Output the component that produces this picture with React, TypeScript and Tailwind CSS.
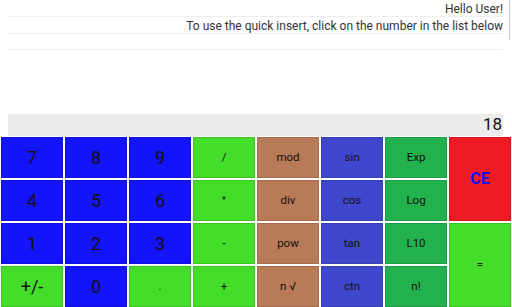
import React from 'react';

type Key = {
  label: string;
  bg: string;
  text?: string;
  span?: string;
};

const BLUE = 'bg-[#1414fb] border-[#1010d8]';
const LIME = 'bg-[#44dd2a] border-[#3cc424]';
const BROWN = 'bg-[#b97a57] border-[#a86c4c]';
const INDIGO = 'bg-[#3f48cc] border-[#3840b4]';
const GREEN = 'bg-[#22b14c] border-[#1e9c43]';
const RED = 'bg-[#ed1c24] border-[#d8161e]';

const keys: Key[] = [
  { label: '7', bg: BLUE, text: 'text-[18px]' },
  { label: '8', bg: BLUE, text: 'text-[18px]' },
  { label: '9', bg: BLUE, text: 'text-[18px]' },
  { label: '/', bg: LIME },
  { label: 'mod', bg: BROWN },
  { label: 'sin', bg: INDIGO },
  { label: 'Exp', bg: GREEN },
  { label: 'CE', bg: RED, text: 'text-[16px] font-bold text-[#1010ff]', span: 'row-span-2' },

  { label: '4', bg: BLUE, text: 'text-[18px]' },
  { label: '5', bg: BLUE, text: 'text-[18px]' },
  { label: '6', bg: BLUE, text: 'text-[18px]' },
  { label: '*', bg: LIME, text: 'text-[9px]' },
  { label: 'div', bg: BROWN },
  { label: 'cos', bg: INDIGO },
  { label: 'Log', bg: GREEN },

  { label: '1', bg: BLUE, text: 'text-[18px]' },
  { label: '2', bg: BLUE, text: 'text-[18px]' },
  { label: '3', bg: BLUE, text: 'text-[18px]' },
  { label: '-', bg: LIME },
  { label: 'pow', bg: BROWN },
  { label: 'tan', bg: INDIGO },
  { label: 'L10', bg: GREEN },
  { label: '=', bg: LIME, span: 'row-span-2' },

  { label: '+/-', bg: LIME, text: 'text-[18px]' },
  { label: '0', bg: BLUE, text: 'text-[18px]' },
  { label: '.', bg: LIME },
  { label: '+', bg: LIME },
  { label: 'n √', bg: BROWN },
  { label: 'ctn', bg: INDIGO },
  { label: 'n!', bg: GREEN },
];

export default function App() {
  return (
    <div
      className="relative w-[512px] h-[307px] overflow-hidden bg-white flex flex-col"
      style={{ fontFamily: 'Roboto, "Liberation Sans", sans-serif' }}
    >
      {/* scroll indicator */}
      <div className="absolute right-[2px] top-0 w-[1px] h-[40px] bg-[#c8c8c8]" />

      {/* Header */}
      <div className="px-[8px] pr-[9px] text-[12px] text-[#333] text-right leading-none">
        <div className="h-[17px] border-b border-[#eeeeee] flex items-center justify-end pt-[1px]">
          Hello User!
        </div>
        <div className="h-[17px] border-b border-[#eeeeee] flex items-center justify-end pt-[1px]">
          To use the quick insert, click on the number in the list below
        </div>
        <div className="h-[16px] border-b border-[#eeeeee]" />
      </div>

      <div className="flex-1" />

      {/* Display */}
      <div className="mx-[8px] mr-[9px] h-[22px] bg-[#ececec] flex items-center justify-end pr-[1px] text-[17px] text-[#111]">
        18
      </div>

      {/* Keypad */}
      <div className="grid grid-cols-[repeat(8,62px)] grid-rows-[repeat(4,41px)] gap-x-[2px] gap-y-[2px] pl-[1px] pt-[1px]">
        {keys.map((k, i) => (
          <div
            key={i}
            className={`${k.bg} ${k.span ?? ''} border flex items-center justify-center ${
              k.text ?? 'text-[11.5px]'
            } ${k.text?.includes('text-[#') ? '' : 'text-[#111]'}`}
          >
            {k.label}
          </div>
        ))}
      </div>
    </div>
  );
}
